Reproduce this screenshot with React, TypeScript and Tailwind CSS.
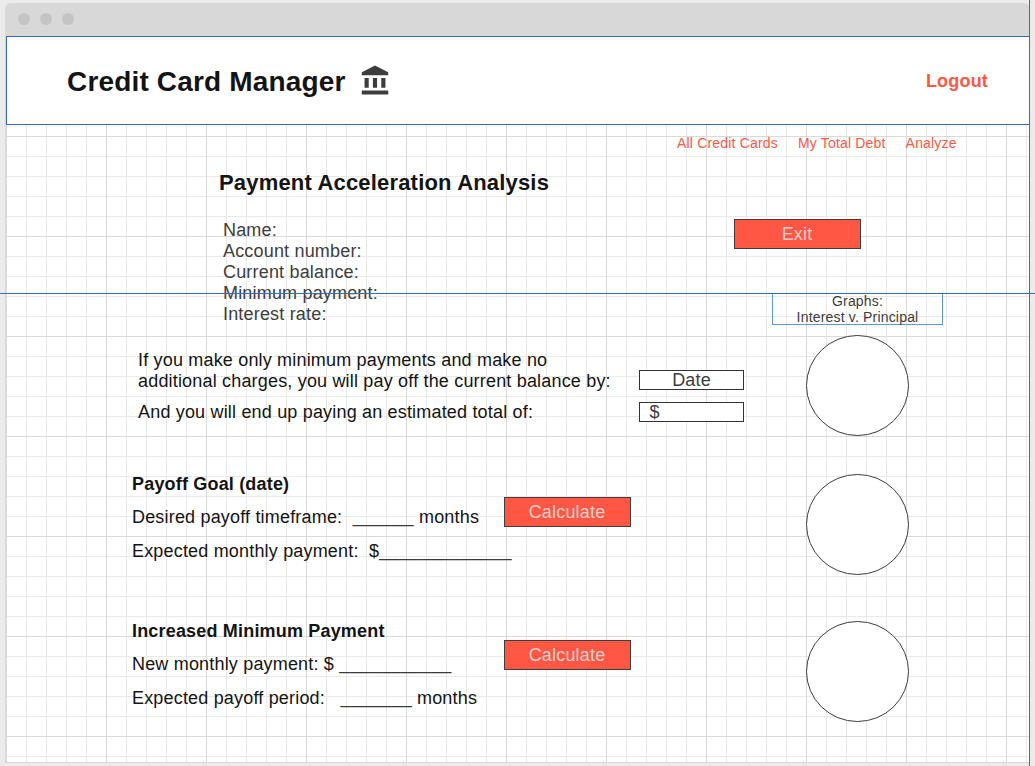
import React from "react";

const GRID =
  "bg-white bg-[linear-gradient(to_right,#dadada_1px,transparent_1px),linear-gradient(to_bottom,#dadada_1px,transparent_1px),linear-gradient(to_right,#e9e9e9_1px,transparent_1px),linear-gradient(to_bottom,#e9e9e9_1px,transparent_1px)] bg-[size:100px_100px,100px_100px,20px_20px,20px_20px]";

function BankIcon() {
  return (
    <svg viewBox="0 0 24 24" className="ml-[13.7px] h-[33.4px] w-[33.4px] fill-[#3d3d3d]">
      <path d="M4 10v7h3v-7H4zm6 0v7h3v-7h-3zM2 22h19v-3H2v3zm14-12v7h3v-7h-3zm-4.5-9L2 6v2h19V6l-9.5-5z" />
    </svg>
  );
}

function ActionButton({ label, className }: { label: string; className: string }) {
  return (
    <button
      className={`h-[30px] w-[127px] shrink-0 border border-[#3d3d3d] bg-[#ff5743] pr-px text-[18px] leading-[28px] text-[#e6cfcc] ${className}`}
    >
      {label}
    </button>
  );
}

function Blank({ length }: { length: number }) {
  return <span className="inline-block h-[21px] -translate-y-px align-top text-[#3a3a3a]">{"_".repeat(length)}</span>;
}

function Pie({ className }: { className: string }) {
  return (
    <svg viewBox="0 0 103 101" className={`ml-[34px] block h-[101px] w-[103px] ${className}`}>
      <ellipse cx="51.5" cy="50.5" rx="51" ry="50" fill="#fff" stroke="#3d3d3d" strokeWidth="1" />
    </svg>
  );
}

export default function App() {
  return (
    <div className="relative h-[766px] w-[1035px] overflow-hidden bg-[#ebebeb] pt-[3px] pl-[5px] font-['Liberation_Sans',Arial,sans-serif] text-[18px] leading-[21px] tracking-[0.18px] text-[#141414]">
      <div className="flex h-[760px] w-[1025px] flex-col rounded-t-[6px] border-b border-l border-[#d8d8d8] bg-[#d8d8d8]">
        <div className="flex h-[33px] shrink-0 items-start gap-[10px] pt-[10px] pl-[12px]">
          <span className="h-3 w-3 rounded-full bg-[#c4c4c4]" />
          <span className="h-3 w-3 rounded-full bg-[#c4c4c4]" />
          <span className="h-3 w-3 rounded-full bg-[#c4c4c4]" />
        </div>
        <div className={`flex grow flex-col ${GRID}`}>
          <header className="flex h-[89px] shrink-0 items-center border border-r-0 border-[#2b6cc4] bg-white pl-[60px] pr-[42px]">
            <h1 className="pt-[2px] text-[28px] leading-8 font-bold tracking-[0.17px]">Credit Card Manager</h1>
            <BankIcon />
            <a className="ml-auto pt-[2px] text-[18px] font-bold text-[#ff5743]">Logout</a>
          </header>

          <nav className="mt-[10px] flex h-4 shrink-0 gap-5 pl-[671px] text-[14px] leading-4 whitespace-nowrap text-[#ff5743]">
            <a>All Credit Cards</a>
            <a>My Total Debt</a>
            <a>Analyze</a>
          </nav>

          <div className="flex">
            <main className="w-[766px] shrink-0">
              <h2 className="mt-[19px] ml-[213px] text-[22px] leading-[26px] font-bold">
                Payment Acceleration Analysis
              </h2>
              <div className="mt-[24px] ml-[217px] text-[#3d3d3d]">
                <p>Name:</p>
                <p>Account number:</p>
                <p>Current balance:</p>
                <p>Minimum payment:</p>
                <p>Interest rate:</p>
              </div>

              <section className="mt-[25px] ml-[132px] flex">
                <div className="w-[501px] shrink-0 whitespace-nowrap">
                  <p>
                    If you make only minimum payments and make no
                    <br />
                    additional charges, you will pay off the current balance by:
                  </p>
                  <p className="mt-[10px]">And you will end up paying an estimated total of:</p>
                </div>
                <div className="flex flex-col gap-3 pt-[20px] text-[#3d3d3d]">
                  <div className="h-5 w-[105px] border border-[#333] bg-white text-center leading-[18px]">Date</div>
                  <div className="h-5 w-[105px] border border-[#333] bg-white pl-[9.5px] leading-[18px]">$</div>
                </div>
              </section>

              <section className="mt-[51px] ml-[126px] flex whitespace-pre">
                <div className="w-[372px] shrink-0">
                  <h3 className="font-bold">Payoff Goal (date)</h3>
                  <p className="mt-[12px] h-[21px]">
                    {"Desired payoff timeframe:  "}
                    <Blank length={6} />
                    {" months"}
                  </p>
                  <p className="mt-[13px] h-[21px]">
                    {"Expected monthly payment:  $"}
                    <Blank length={13} />
                  </p>
                </div>
                <ActionButton label="Calculate" className="mt-[23px]" />
              </section>

              <section className="mt-[59px] ml-[126px] flex whitespace-pre">
                <div className="w-[372px] shrink-0">
                  <h3 className="font-bold">Increased Minimum Payment</h3>
                  <p className="mt-[12px] h-[21px]">
                    {"New monthly payment: $ "}
                    <Blank length={11} />
                  </p>
                  <p className="mt-[13px] h-[21px]">
                    {"Expected payoff period:   "}
                    <Blank length={7} />
                    {" months"}
                  </p>
                </div>
                <ActionButton label="Calculate" className="mt-[19px]" />
              </section>
            </main>

            <aside className="w-[171px] shrink-0">
              <ActionButton label="Exit" className="mt-[68px] -ml-[38px] block" />
              <div className="mt-[44px] h-8 border border-[#5a97ec] text-center text-[14px] leading-4 text-[#3d3d3d]">
                <p className="-mt-px">
                  Graphs:
                  <br />
                  Interest v. Principal
                </p>
              </div>
              <Pie className="mt-[10px]" />
              <Pie className="mt-[38px]" />
              <Pie className="mt-[46px]" />
            </aside>
          </div>
        </div>
      </div>
      <div className="absolute top-[293px] left-0 h-px w-full bg-[#2f6fd0]" />
      <div className="absolute top-0 left-[1029px] h-full w-px bg-[#2f6fd0]" />
    </div>
  );
}
